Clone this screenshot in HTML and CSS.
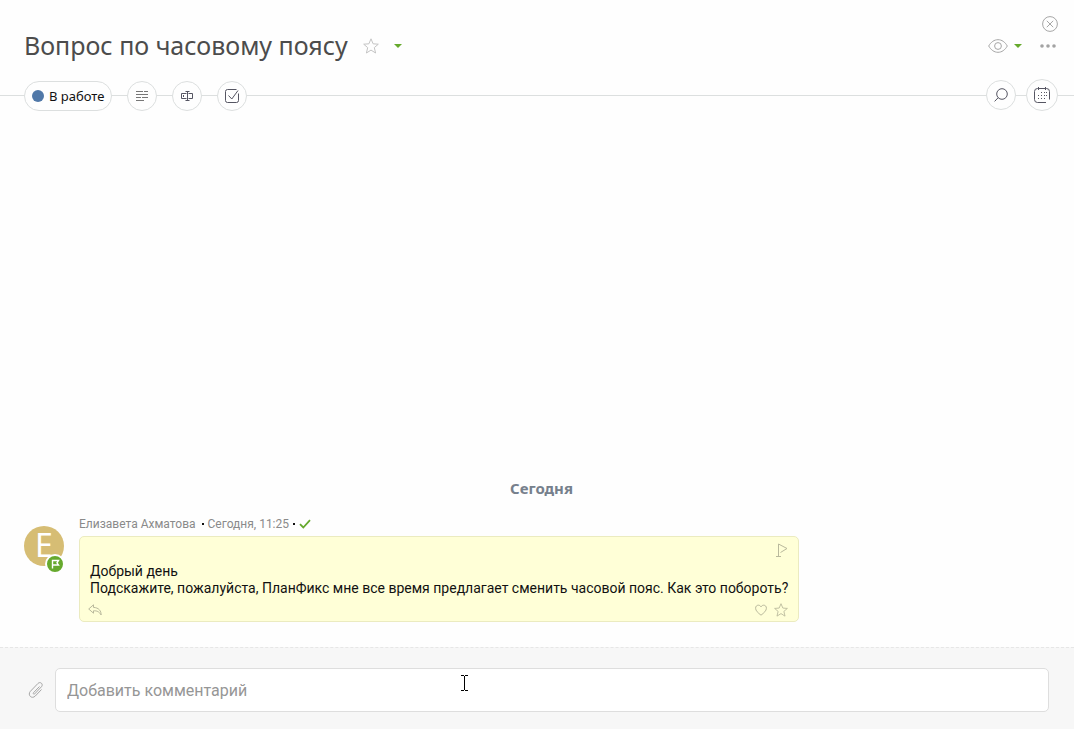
FILE: index.html
```html
<!DOCTYPE html>
<html lang="ru">
<head>
<meta charset="UTF-8">
<meta name="viewport" content="width=device-width, initial-scale=1.0">
<title>Вопрос по часовому поясу</title>
<link rel="stylesheet" href="styles.css">
</head>
<body>
<header class="header">
    <div class="title-row">
        <h1 class="title">Вопрос по часовому поясу</h1>
        <button type="button" class="icon-btn" aria-label="В избранное">
            <svg width="16" height="16" viewBox="0 0 16 16"><path class="thin" d="M8 .8l2.1 5 5.2.4-4 3.4 1.3 5.4L8 12.1 3.4 15l1.3-5.4-4-3.400 5.200-.4z"/></svg>
        </button>
        <button type="button" class="icon-btn arrow" aria-label="Меню задачи"></button>
    </div>
    <div class="window-tools">
        <button type="button" class="icon-btn" aria-label="Закрыть">
            <svg width="16" height="16" viewBox="0 0 16 16"><circle class="mid" cx="8" cy="8" r="7.4"/><path class="mid" d="M4.800 4.800l6.400 6.400M11.200 4.800l-6.400 6.400"/></svg>
        </button>
        <div class="view-tools">
            <button type="button" class="icon-btn" aria-label="Наблюдать">
                <svg width="20" height="14" viewBox="0 0 20 14"><path class="mid" d="M.7 7C3 3 6.200.7 10 .7S17 3 19.300 7C17 11 13.800 13.300 10 13.300S3 11 .7 7z"/><circle class="mid" cx="10" cy="7" r="3.400"/></svg>
            </button>
            <button type="button" class="icon-btn arrow" aria-label="Режим просмотра"></button>
            <button type="button" class="icon-btn more" aria-label="Ещё">
                <svg width="16" height="4" viewBox="0 0 16 4"><g fill="#a3a3a3"><circle cx="2" cy="2" r="1.800"/><circle cx="8" cy="2" r="1.800"/><circle cx="14" cy="2" r="1.800"/></g></svg>
            </button>
        </div>
    </div>
</header>

<nav class="toolbar">
    <div class="toolbar-left">
        <button type="button" class="status"><span class="status-dot"></span>В работе</button>
        <button type="button" class="round-btn" aria-label="Описание">
            <svg width="12" height="10" viewBox="0 0 12 10"><path d="M0 .5h7M8 .5h4M0 3.500h12M0 6.500h5M6 6.500h6M0 9.500h8" stroke="#777" fill="none"/></svg>
        </button>
        <button type="button" class="round-btn" aria-label="Поля">
            <svg width="12" height="10" viewBox="0 0 12 10"><path d="M5.500 2.500h-5v5h5M7.500 2.500h4v5h-4M6.500 .5v9M4.500 .5h4M4.500 9.500h4M2.500 4v2" stroke="#555562" fill="none"/></svg>
        </button>
        <button type="button" class="round-btn" aria-label="Чек-лист">
            <svg width="14" height="14" viewBox="0 0 14 14"><path class="dark" d="M13.500 4.500v7a2 2 0 0 1-2 2h-9a2 2 0 0 1-2-2v-9a2 2 0 0 1 2-2h9M3.500 6.500l3.300 3.500L13 1.500"/></svg>
        </button>
    </div>
    <div class="toolbar-right">
        <button type="button" class="round-btn" aria-label="Поиск">
            <svg width="14" height="14" viewBox="0 0 14 14"><circle class="dark" cx="8" cy="6" r="5.300"/><path class="dark" d="M4.200 9.700L.6 13.400"/></svg>
        </button>
        <button type="button" class="round-btn large" aria-label="Календарь">
            <svg width="16" height="16" viewBox="0 0 16 16"><path class="dark" d="M12 15.500H3.500a3 3 0 0 1-3-3v-8a3 3 0 0 1 3-3h9a3 3 0 0 1 3 3v8M4.500 0v3M11.500 0v3"/><g fill="#555562"><path d="M7 5h1v1H7zM10 5h1v1h-1zM4 8h1v1H4zM7 8h1v1H7zM10 8h1v1h-1zM12 5h1v1h-1zM12 8h1v1h-1zM4 11h1v1H4zM7 11h1v1H7zM10 11h1v1h-1z"/></g></svg>
        </button>
    </div>
</nav>

<main class="feed">
    <h2 class="day">Сегодня</h2>
    <article class="comment">
        <div class="avatar">Е
            <span class="badge">
                <svg width="16" height="16" viewBox="0 0 16 16"><path d="M5.500 12.500v-8h6l-1.500 2.300 1.500 2.200h-6" fill="none" stroke="#fff" stroke-width="1.400"/></svg>
            </span>
        </div>
        <div class="comment-main">
            <div class="meta">
                <a href="#" class="author">Елизавета Ахматова</a>
                <span class="dot"></span>
                <time>Сегодня, 11:25</time>
                <span class="dot"></span>
                <svg width="12" height="10" viewBox="0 0 12 10"><path d="M1 5.200l3.300 3.300L11 1.200" fill="none" stroke="#66a92d" stroke-width="1.800"/></svg>
            </div>
            <div class="bubble">
                <div class="bubble-tools end">
                    <button type="button" class="icon-btn" aria-label="Отметить">
                        <svg width="12" height="14" viewBox="0 0 12 14"><path class="soft" d="M2.500 13V1l8.500 4.500-6.500 4M0 13.500h5"/></svg>
                    </button>
                </div>
                <p class="text">Добрый день<br>Подскажите, пожалуйста, ПланФикс мне все время предлагает сменить часовой пояс. Как это побороть?</p>
                <div class="bubble-tools">
                    <button type="button" class="icon-btn reply" aria-label="Ответить">
                        <svg width="14" height="12" viewBox="0 0 14 12"><path class="soft" d="M5.500.8L.7 5l4.800 4.200V6.800c3.300-.2 5.800.8 7.600 4.200.2-4-2.300-7.400-7.600-7.600z"/></svg>
                    </button>
                    <button type="button" class="icon-btn" aria-label="Нравится">
                        <svg width="12" height="12" viewBox="0 0 12 12"><path class="soft" d="M6 11.200C3 8.800.6 6.800.6 4.200.6 2.300 1.800 1.200 3.300 1.200 4.500 1.200 5.400 1.800 6 2.900c.6-1.100 1.500-1.700 2.700-1.700 1.500 0 2.700 1.100 2.700 3 0 2.600-2.400 4.600-5.400 7z"/></svg>
                    </button>
                    <button type="button" class="icon-btn" aria-label="В избранное">
                        <svg width="14" height="14" viewBox="0 0 16 16"><path class="soft" d="M8 .8l2.100 5 5.200.4-4 3.400 1.300 5.400L8 12.100 3.400 15l1.300-5.400-4-3.400 5.200-.4z"/></svg>
                    </button>
                </div>
            </div>
        </div>
    </article>
</main>

<form class="composer">
    <button type="button" class="icon-btn" aria-label="Прикрепить файл">
        <svg width="16" height="18" viewBox="0 0 16 18"><path class="mid" d="M11.500 5.500l-6 6.200c-.8.900.4 2 1.200 1.200l6.800-7.200c2.200-2.500-1.200-5.700-3.600-3.200L2.400 10.300c-3.300 3.700 1.400 8.300 4.900 4.700l6.200-6.500"/></svg>
    </button>
    <input type="text" class="comment-input" placeholder="Добавить комментарий" aria-label="Добавить комментарий">
</form>

<svg class="cursor" width="7" height="16" viewBox="0 0 7 16"><path d="M0 .5h3M4 .5h3M3.500 1v14M0 15.500h3M4 15.500h3" stroke="#000" fill="none"/></svg>
</body>
</html>
```
FILE: styles.css
```css
* {
    box-sizing: border-box;
}

body {
    display: flex;
    flex-direction: column;
    min-height: 100vh;
    margin: 0;
    background-color: #fefefe;
    color: #111;
    font-family: "Noto Sans", "Open Sans", sans-serif;
    font-size: 13px;
}

button {
    font: inherit;
    color: inherit;
    cursor: pointer;
}

svg {
    display: block;
}

.thin, .mid, .soft, .dark {
    fill: none;
}
.thin { stroke: #c4c4c4; }
.mid { stroke: #a6a6a6; }
.soft { stroke: #b9b99c; }
.dark { stroke: #555562; }

.icon-btn {
    display: flex;
    padding: 0;
    border: none;
    background: none;
}

.arrow {
    border-left: 4px solid transparent;
    border-right: 4px solid transparent;
    border-top: 4px solid #66a92d;
}

/* header */
.header {
    display: flex;
    justify-content: space-between;
    padding: 16px 16px 0 24px;
}

.title-row {
    display: flex;
    align-items: center;
    gap: 15px;
    padding-top: 12px;
}

.title {
    margin: 0;
    padding-bottom: 2px;
    color: #4c4c4c;
    font-size: 25px;
    font-weight: 400;
    line-height: 34px;
}

.window-tools {
    display: flex;
    flex-direction: column;
    align-items: flex-end;
    gap: 7px;
}

.view-tools {
    display: flex;
    align-items: center;
    gap: 6px;
    padding-right: 2px;
}

.more {
    margin-left: 12px;
}

/* toolbar */
.toolbar {
    position: relative;
    display: flex;
    justify-content: space-between;
    margin-top: 15px;
    padding: 0 16px 0 24px;
}

.toolbar::before {
    content: "";
    position: absolute;
    top: 16px;
    left: 0;
    right: 0;
    border-top: 1px solid #dcdfdf;
}

.toolbar-left, .toolbar-right {
    position: relative;
    display: flex;
    align-items: flex-end;
    gap: 15px;
}

.toolbar-right {
    align-items: center;
    gap: 10px;
}

.status, .round-btn {
    display: flex;
    align-items: center;
    justify-content: center;
    height: 30px;
    padding: 0;
    border: 1px solid #dcdfdf;
    border-radius: 16px;
    background-color: #fefefe;
}

.round-btn {
    width: 30px;
}

.large {
    width: 32px;
    height: 32px;
}

.status {
    gap: 5px;
    padding: 0 7px;
}

.status-dot {
    width: 12px;
    height: 12px;
    border-radius: 50%;
    background-color: #5078a8;
}

/* comments */
.feed {
    flex: 1;
    display: flex;
    flex-direction: column;
    justify-content: flex-end;
    padding: 0 24px 25px;
}

.day {
    margin: 0 0 17px;
    padding-left: 9px;
    color: #76808c;
    font-size: 15px;
    line-height: 22px;
    text-align: center;
}

.comment {
    display: flex;
    gap: 15px;
}

.avatar {
    position: relative;
    flex: none;
    width: 40px;
    height: 40px;
    margin-top: 10px;
    border-radius: 50%;
    background-color: #d6bd74;
    color: #fff;
    font-size: 32px;
    line-height: 38px;
    text-align: center;
}

.badge {
    position: absolute;
    right: -1px;
    bottom: -8px;
    border: 2px solid #fefefe;
    border-radius: 50%;
    background-color: #66a92d;
}

.meta {
    display: flex;
    align-items: center;
    gap: 4px;
    height: 20px;
    padding-bottom: 4px;
    color: #8a8a8a;
    font-family: Roboto, sans-serif;
    font-size: 12px;
}

.author {
    margin-right: 2px;
    color: inherit;
    text-decoration: none;
}

.dot {
    width: 2px;
    height: 2px;
    background-color: #111;
}

.bubble {
    padding: 5px 10px 3px 8px;
    border: 1px solid #ebebc0;
    border-radius: 5px;
    background-color: #ffffd7;
}

.bubble-tools {
    display: flex;
    align-items: center;
    gap: 7px;
    height: 16px;
}

.end {
    justify-content: flex-end;
}

.reply {
    margin-right: auto;
}

.text {
    margin: 5px 0 5px 2px;
    font-family: Roboto, sans-serif;
    font-size: 14px;
    line-height: 17px;
}

/* new comment */
.composer {
    display: flex;
    align-items: center;
    gap: 11px;
    padding: 20px 25px 17px 28px;
    border-top: 1px dashed #e6e6e6;
    background-color: #f7f7f7;
}

.comment-input {
    flex: 1;
    min-width: 0;
    height: 44px;
    padding: 0 11px;
    border: 1px solid #dedede;
    border-radius: 5px;
    background-color: #fff;
    font-family: Roboto, sans-serif;
    font-size: 16px;
}

.comment-input::placeholder {
    color: #969696;
}

.cursor {
    position: absolute;
    left: 461px;
    top: 675px;
}
```
